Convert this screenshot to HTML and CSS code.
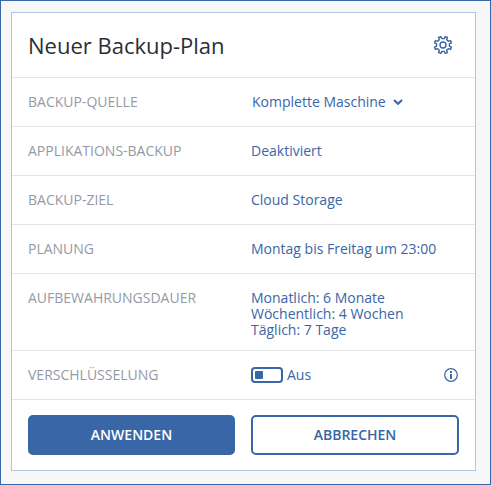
FILE: index.html
```html
<!DOCTYPE html>
<html lang="de">
<head>
<meta charset="utf-8">
<title>Neuer Backup-Plan</title>
<link rel="stylesheet" href="styles.css">
</head>
<body>
<main class="plan">
  <header class="plan-header">
    <h1>Neuer Backup-Plan</h1>
    <svg class="gear" viewBox="-10 -10 20 20" width="20" height="20">
      <path d="M6.390 1.180L8.420 2.180 7.500 4.420 5.360 3.680 3.680 5.360 4.420 7.500 2.180 8.420 1.180 6.390H-1.180L-2.180 8.420-4.420 7.500-3.680 5.360-5.360 3.680-7.500 4.420-8.420 2.180-6.390 1.180V-1.180L-8.420-2.180-7.500-4.420-5.360-3.680-3.680-5.360-4.420-7.500-2.180-8.420-1.180-6.390H1.180L2.180-8.420 4.420-7.500 3.680-5.360 5.360-3.680 7.500-4.420 8.420-2.180 6.390-1.180z"/>
      <circle r="3"/>
    </svg>
  </header>
  <section class="row">
    <span class="label">BACKUP-QUELLE</span>
    <span class="value source">Komplette Maschine
      <svg class="chevron" viewBox="0 0 10 8" width="10" height="8"><path d="M1 2l4 3.800L9 2"/></svg>
    </span>
  </section>
  <section class="row"><span class="label">APPLIKATIONS-BACKUP</span><span class="value">Deaktiviert</span></section>
  <section class="row"><span class="label">BACKUP-ZIEL</span><span class="value">Cloud Storage</span></section>
  <section class="row"><span class="label">PLANUNG</span><span class="value">Montag bis Freitag um 23:00</span></section>
  <section class="row retention">
    <span class="label">AUFBEWAHRUNGSDAUER</span>
    <span class="value">Monatlich: 6 Monate<br>Wöchentlich: 4 Wochen<br>Täglich: 7 Tage</span>
  </section>
  <section class="row">
    <span class="label">VERSCHLÜSSELUNG</span>
    <span class="value encryption"><span class="switch"></span>Aus
      <svg class="info" viewBox="0 0 14 14" width="14" height="14">
        <circle cx="7" cy="7" r="6.300"/>
        <path d="M6 3h2v2H6zM6 6h2v5H6z"/>
      </svg>
    </span>
  </section>
  <footer class="actions">
    <button class="button primary">ANWENDEN</button>
    <button class="button">ABBRECHEN</button>
  </footer>
</main>
</body>
</html>
```
FILE: styles.css
```css
* {
  box-sizing: border-box;
}

body {
  margin: 0;
  height: 485px;
  padding: 11px 14px 0 10px;
  border: 1px solid #3966a6;
  background: #f7f7f7;
  color: #3966a6;
  font: 14px/16px "Open Sans", sans-serif;
}

.plan {
  height: 459px;
  border: 1px solid #b3c5dd;
  background: #fff;
}

.plan-header {
  display: flex;
  align-items: center;
  justify-content: space-between;
  height: 65px;
  padding: 0 16px;
  border-bottom: 1px solid #e4e5e7;
}

h1 {
  margin: 0;
  color: #2b2f36;
  font-size: 22px;
  font-weight: 400;
  line-height: 30px;
}

svg {
  flex: none;
  fill: none;
  stroke: currentColor;
}

.gear {
  margin-right: 6px;
  stroke-width: 1.4;
  stroke-linejoin: round;
}

.row {
  display: grid;
  grid-template-columns: 223px 1fr;
  height: 49px;
  padding: 16px 16px 0;
  border-bottom: 1px solid #e4e5e7;
}

.retention {
  height: 77px;
}

.label {
  color: #949aa5;
}

.source,
.encryption {
  display: flex;
  align-items: center;
  height: 16px;
}

.source {
  padding-left: 1px;
}

.chevron {
  margin-left: 7px;
  stroke-width: 2;
}

.switch {
  width: 32px;
  height: 16px;
  margin-right: 4px;
  padding: 2px;
  border: 2px solid #3966a6;
  border-radius: 4px;
}

.switch::before {
  content: "";
  display: block;
  width: 8px;
  height: 8px;
  border-radius: 1px;
  background: #3966a6;
}

.info {
  margin-left: auto;
  margin-right: 1px;
  stroke-width: 1.2;
}

.info path {
  fill: currentColor;
  stroke: none;
}

.actions {
  display: grid;
  grid-template-columns: 207px 208px;
  gap: 16px;
  padding: 15px 16px;
}

.button {
  height: 40px;
  padding: 0;
  border: 2px solid #3966a6;
  border-radius: 5px;
  background: #fff;
  color: #3966a6;
  font: 600 14px/20px "Open Sans", sans-serif;
}

.primary {
  background: #3966a6;
  color: #fff;
}
```
